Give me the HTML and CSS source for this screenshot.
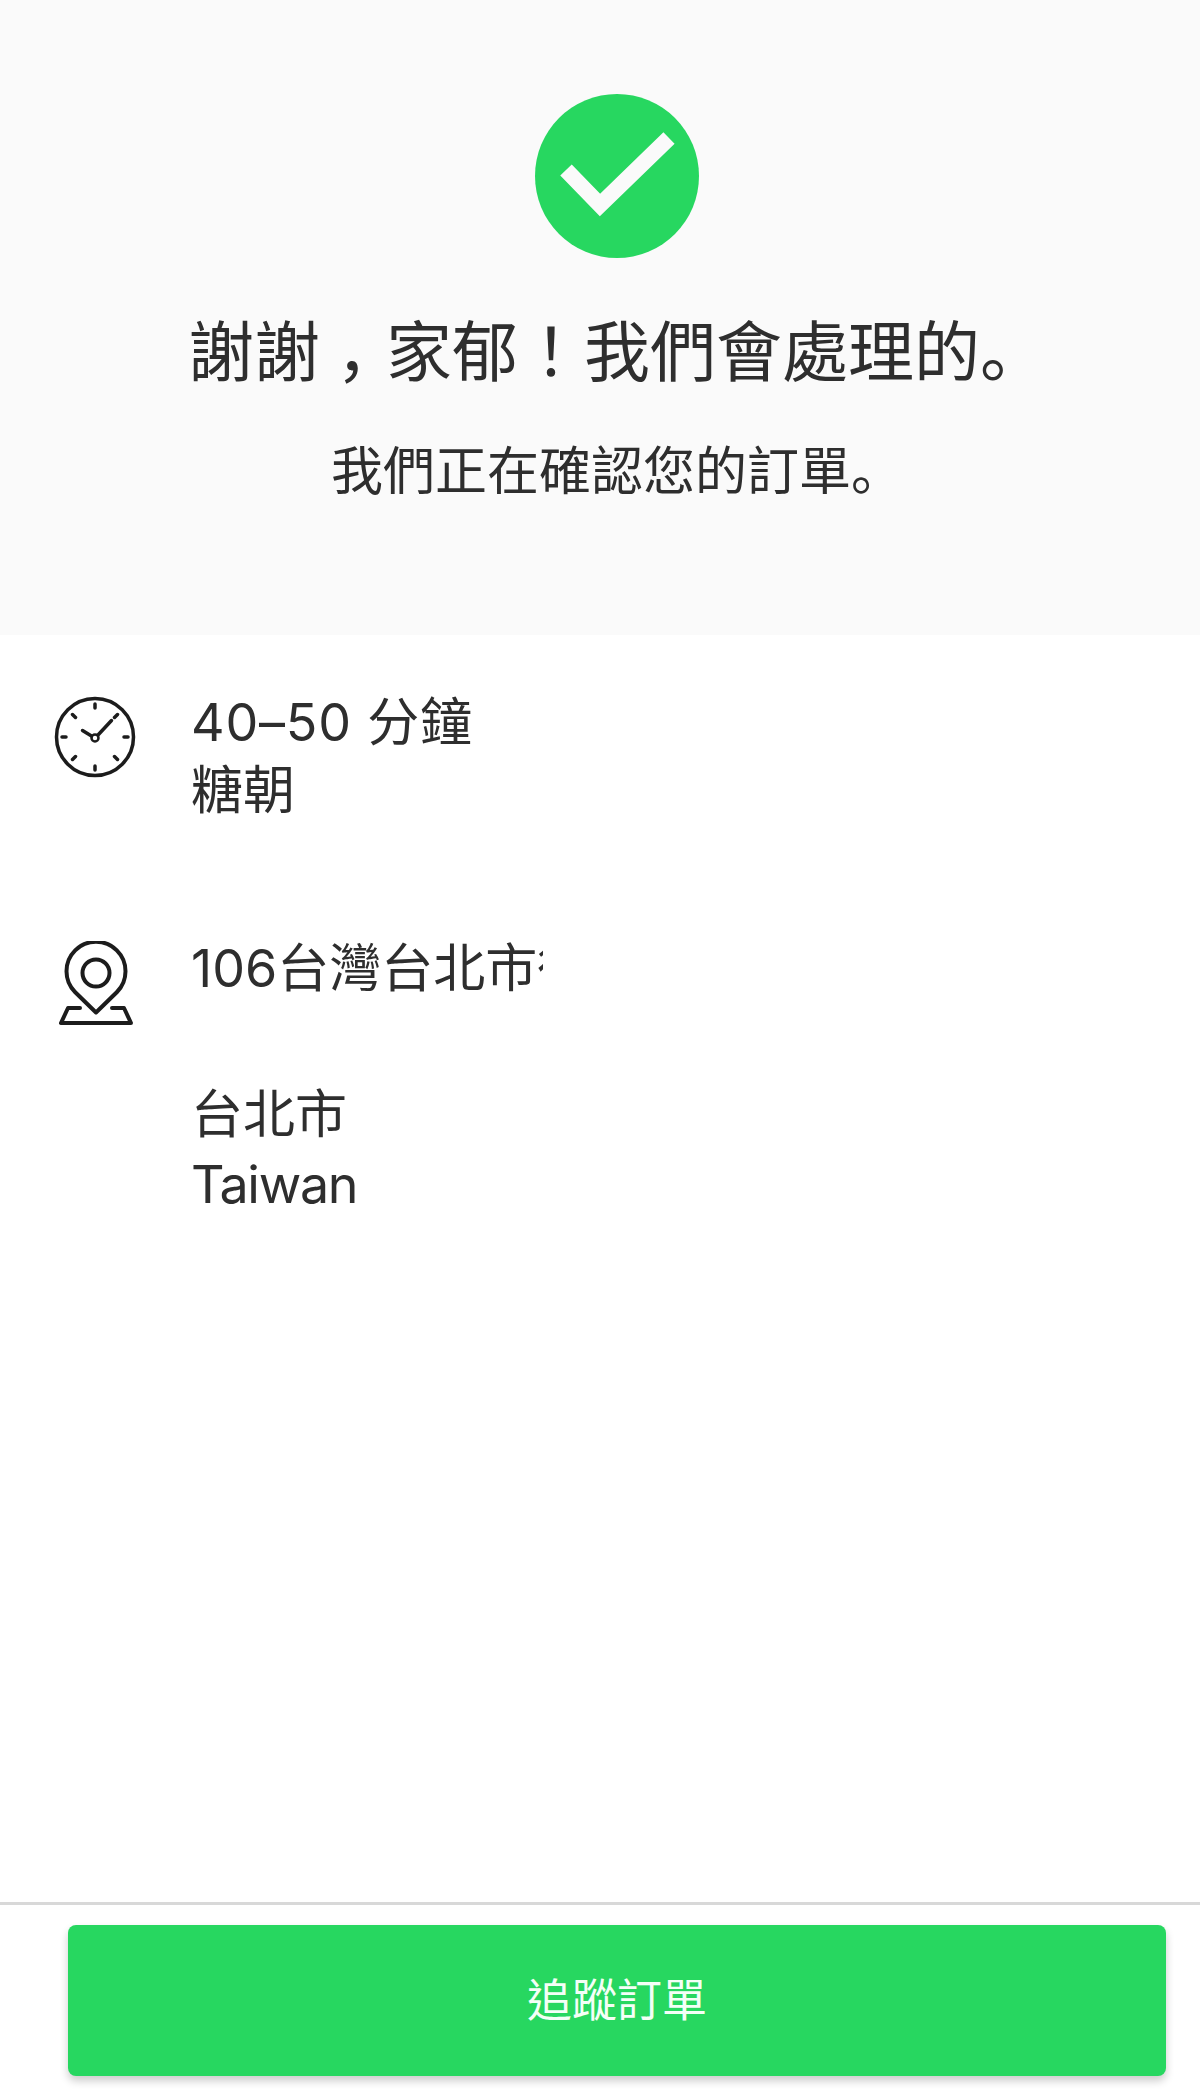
FILE: index.html
```html
<!DOCTYPE html>
<html lang="zh-Hant">
<head>
    <meta charset="UTF-8">
    <meta name="viewport" content="width=device-width, initial-scale=1.0">
    <title>訂單確認</title>
    <link rel="stylesheet" href="styles.css">
</head>
<body>
    <header class="thanks">
        <svg class="check-icon" viewBox="0 0 164 164" width="164" height="164">
            <circle cx="82" cy="82" r="82" fill="#27d760"/>
            <path d="M31 76 L65 111 L134 44" fill="none" stroke="#fafafa" stroke-width="16"/>
        </svg>
        <h1>謝謝<span class="mark-comma">，</span>家郁<span class="mark-bang">！</span>我們會處理的。</h1>
        <p>我們正在確認您的訂單。</p>
    </header>

    <main class="details">
        <div class="row row-time">
            <svg class="row-icon" viewBox="0 0 84 84" width="84" height="84">
                <g fill="none" stroke="#1c1c1c" stroke-linecap="round">
                    <circle cx="42" cy="42" r="38.5" stroke-width="3.5"/>
                    <circle cx="42" cy="43" r="3.5" stroke-width="2.5"/>
                    <path d="M45 40 L58.500 25.500 M38.500 41 L29.500 35.500" stroke-width="3.5"/>
                    <path d="M42 9 V13 M42 71 V75 M9 42 H13 M71 42 H75 M19.500 19.500 L22.500 22.500 M64.500 19.500 L61.500 22.500 M19.500 64.500 L22.500 61.500 M64.500 64.500 L61.500 61.500" stroke-width="3.5"/>
                </g>
            </svg>
            <div class="row-text">
                <div class="eta">40–50 分鐘</div>
                <div>糖朝</div>
            </div>
        </div>

        <div class="row row-address">
            <svg class="row-icon pin" viewBox="28 21 76 84" width="76" height="84">
                <g fill="none" stroke="#1c1c1c" stroke-width="4" stroke-linejoin="round" stroke-linecap="round">
                    <path d="M66 92.500 L45 72 A29.500 29.500 0 1 1 87 72 Z"/>
                    <circle cx="66" cy="53" r="13.500"/>
                    <path d="M50 88 H38 L31 103 H101 L94 88 H82"/>
                </g>
            </svg>
            <div class="row-text address">
                <div>106台灣台北市復興南路</div>
                <div class="blank"></div>
                <div>台北市</div>
                <div class="country">Taiwan</div>
            </div>
        </div>
    </main>

    <footer class="actions">
        <button class="track-button">追蹤訂單</button>
    </footer>
</body>
</html>
```

FILE: styles.css
```css
html, body {
    height: 100%;
}

body {
    margin: 0;
    background-color: #fff;
    color: #2e2e2e;
    font-family: Inter, "Noto Sans CJK SC", sans-serif;
    font-feature-settings: "locl" 0;
    display: flex;
    flex-direction: column;
}

.thanks {
    height: 635px;
    box-sizing: border-box;
    padding: 94px 0 0 34px;
    background-color: #fafafa;
    display: flex;
    flex-direction: column;
    align-items: center;
    text-align: center;
}

.thanks h1 {
    margin: 45px 0 0;
    font-size: 66px;
    line-height: 88px;
    font-weight: 400;
    white-space: nowrap;
}

.mark-comma {
    padding-left: 16px;
    margin-right: -16px;
}

.mark-bang {
    font-family: "Noto Sans CJK TC", sans-serif;
}

.thanks p {
    margin: 40px 0 0;
    font-size: 52px;
    line-height: 72px;
}

.details {
    flex: 1;
    padding: 54px 0 0 53px;
}

.row {
    display: flex;
    align-items: flex-start;
}

.row-time {
    height: 243px;
}

.row-icon {
    flex: none;
    margin-top: 6px;
}

.pin {
    margin: 9px 3px 0 5px;
}

.row-text {
    margin-left: 54px;
    font-size: 52px;
    line-height: 68px;
}

.eta {
    letter-spacing: 0.8px;
}

.address {
    width: 352px;
    height: 300px;
    margin-top: 1px;
    overflow: hidden;
    white-space: nowrap;
    line-height: 72px;
}

.blank {
    height: 74px;
}

.country {
    margin-top: -2px;
    letter-spacing: -1.3px;
}

.actions {
    height: 195px;
    box-sizing: border-box;
    border-top: 3px solid #d8d8d8;
    padding: 20px 34px 0 68px;
}

.track-button {
    display: block;
    width: 100%;
    height: 151px;
    padding: 0 0 6px;
    border: none;
    border-radius: 8px;
    background-color: #27d760;
    color: #f4fff7;
    font-family: inherit;
    font-size: 45px;
    box-shadow: 0 5px 8px rgba(0, 0, 0, 0.2);
}
```
